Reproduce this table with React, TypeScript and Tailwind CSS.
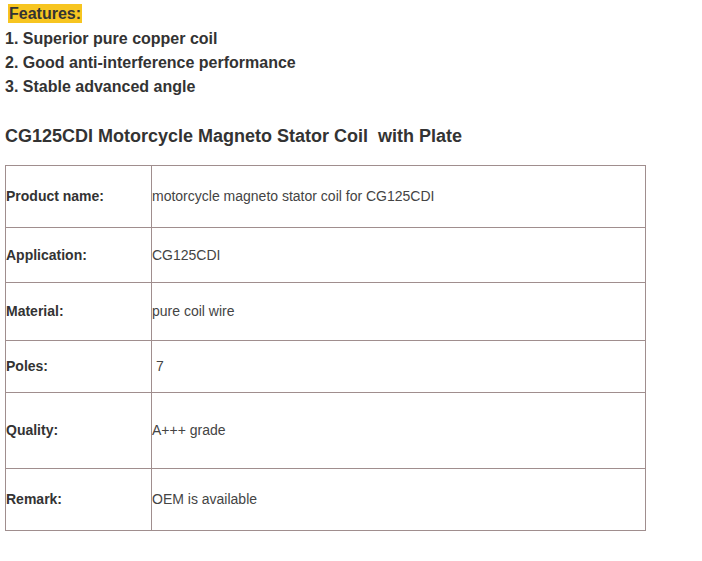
const rows: { label: string; value: string; h: string }[] = [
  { label: "Product name:", value: "motorcycle magneto stator coil for CG125CDI", h: "h-[62px]" },
  { label: "Application:", value: "CG125CDI", h: "h-[55px]" },
  { label: "Material:", value: "pure coil wire", h: "h-[58px]" },
  { label: "Poles:", value: "\u00a07", h: "h-[52px]" },
  { label: "Quality:", value: "A+++ grade", h: "h-[76px]" },
  { label: "Remark:", value: "OEM is available", h: "h-[62px]" },
];

export default function App() {
  return (
    <div className="min-h-[561px] w-[702px] bg-white pl-[5px] pt-[2px] font-['Liberation_Sans',Arial,sans-serif] text-[#333]">
      <div className="text-[16px] font-bold leading-[24px]">
        <p className="pl-[3px]">
          <span className="bg-[#f7c520] px-px py-px">Features:</span>
        </p>
        <p className="mt-px">1. Superior pure copper coil</p>
        <p>2. Good anti-interference performance</p>
        <p>3. Stable advanced angle</p>
      </div>

      <h1 className="mt-[25px] text-[18px] font-bold leading-[24px]">
        CG125CDI Motorcycle Magneto Stator Coil&nbsp; with Plate
      </h1>

      <table className="mt-[17px] w-[641px] border-collapse text-[14px]">
        <tbody>
          {rows.map((r) => (
            <tr key={r.label} className={r.h}>
              <td className="w-[146px] border border-[#a08e8e] p-0 align-middle font-bold">
                {r.label}
              </td>
              <td className="border border-[#a08e8e] p-0 align-middle text-[#444]">
                {r.value}
              </td>
            </tr>
          ))}
        </tbody>
      </table>
    </div>
  );
}
